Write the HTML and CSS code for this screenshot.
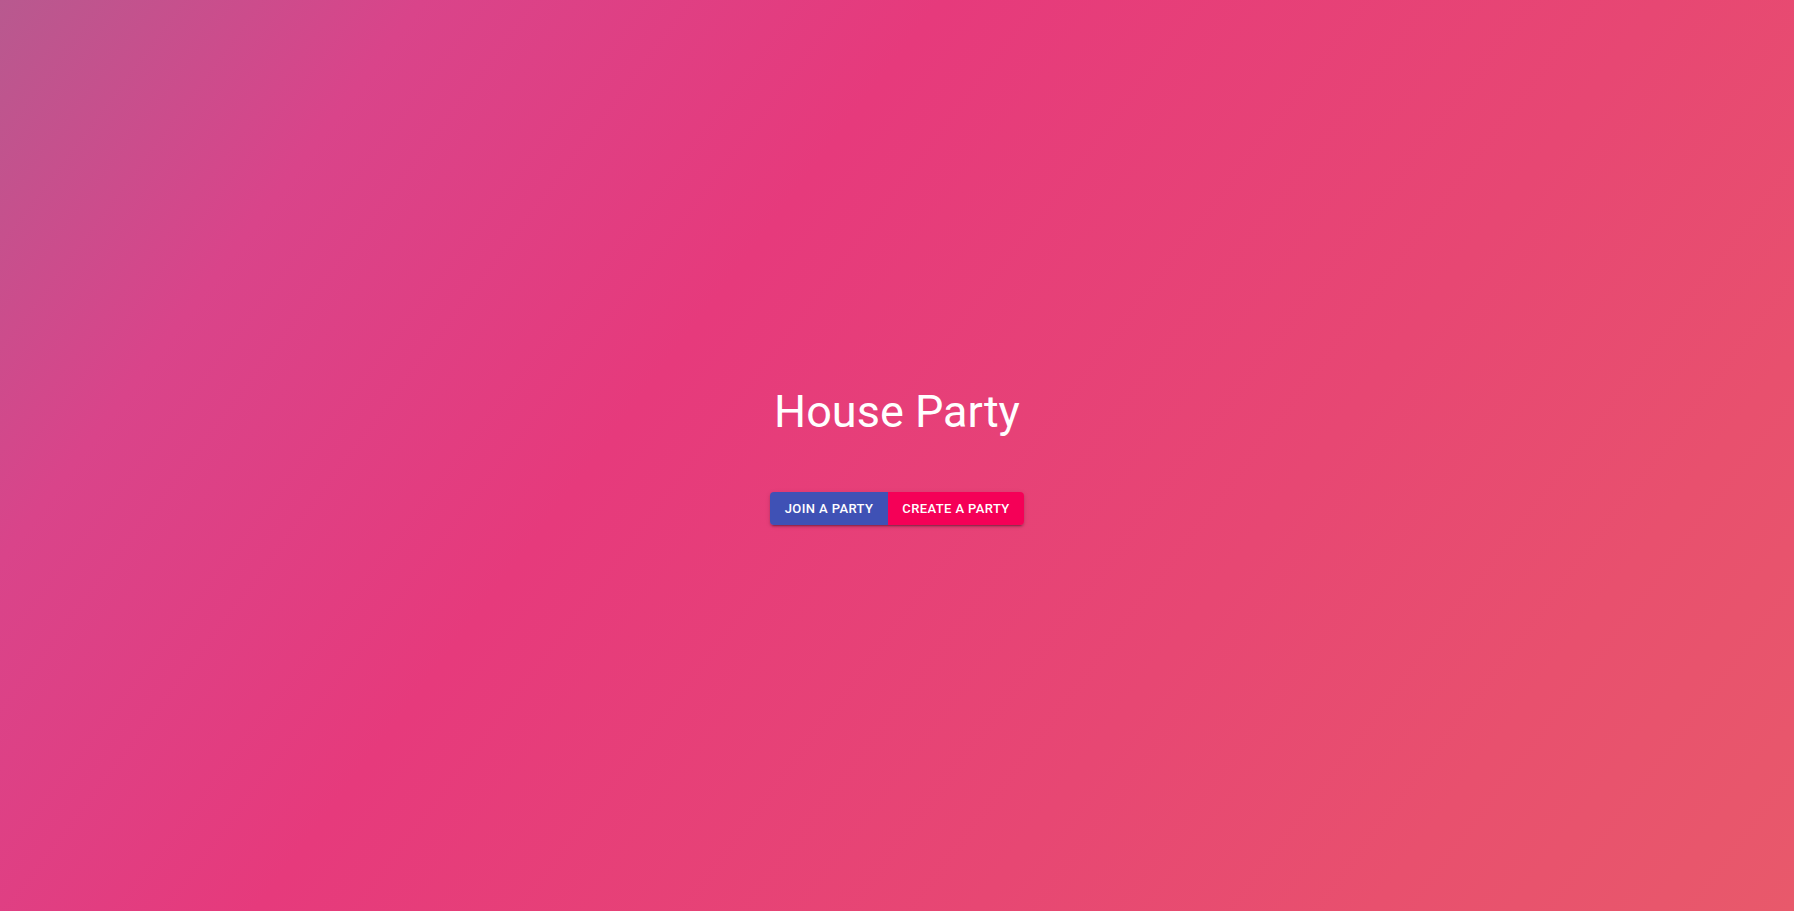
FILE: index.html
```html
<!DOCTYPE html>
<html lang="en">
<head>
<meta charset="utf-8">
<title>House Party</title>
<link rel="stylesheet" href="styles.css">
</head>
<body>
<main class="page">
  <h1 class="title">House Party</h1>
  <div class="btn-group">
    <button class="btn btn-primary">Join A Party</button>
    <button class="btn btn-secondary">Create A Party</button>
  </div>
</main>
</body>
</html>
```
FILE: styles.css
```css
html, body {
  margin: 0;
  padding: 0;
  height: 100%;
}
body {
  font-family: Roboto, "Liberation Sans", sans-serif;
  background: linear-gradient(127deg, #b8598f 0%, #d9448a 17%, #e63a7c 38%, #e74773 67%, #e8506e 83%, #e8596b 100%);
}
.page {
  height: 100%;
  display: flex;
  flex-direction: column;
  align-items: center;
  justify-content: center;
  gap: 54px;
}
.title {
  margin: 0;
  font-size: 45px;
  font-weight: 400;
  line-height: 1.167;
  color: #fff;
}
.btn-group {
  display: flex;
  border-radius: 4px;
  box-shadow: 0 3px 1px -2px rgba(0,0,0,.2), 0 2px 2px 0 rgba(0,0,0,.14), 0 1px 5px 0 rgba(0,0,0,.12);
}
.btn {
  height: 33px;
  border: 0;
  margin: 0;
  padding: 0;
  white-space: nowrap;
  text-align: center;
  font-family: Roboto, "Liberation Sans", sans-serif;
  font-size: 13px;
  font-weight: 500;
  letter-spacing: 0.4px;
  text-transform: uppercase;
  color: #fff;
}
.btn-primary {
  background: #3f51b5;
  border-radius: 4px 0 0 4px;
  width: 118px;
}
.btn-secondary {
  background: #f50057;
  border-radius: 0 4px 4px 0;
  width: 136px;
}
```
